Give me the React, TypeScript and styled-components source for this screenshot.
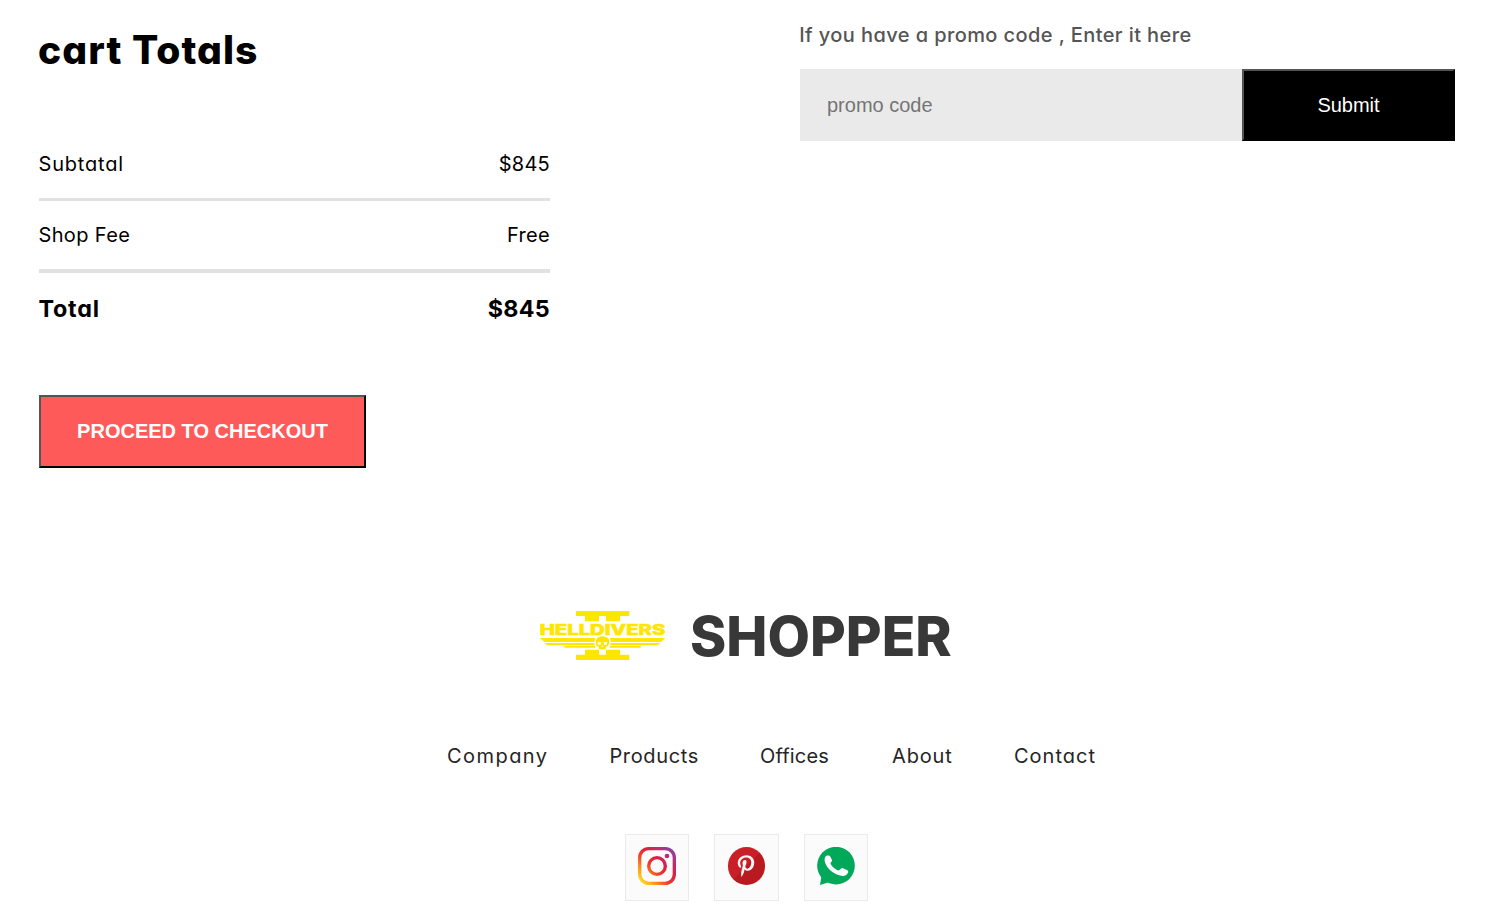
import React from "react";
import styled, { createGlobalStyle } from "styled-components";
import { FaPinterestP } from "react-icons/fa";

const GlobalStyle = createGlobalStyle`
  * { box-sizing: border-box; }
  body {
    margin: 0;
    background: #fff;
    color: #000;
    font-family: Inter, "Open Sans", sans-serif;
    font-feature-settings: "cv11";
    overflow: hidden;
  }
  h1, h3, p, ul { margin: 0; padding: 0; }
`;

const Page = styled.div`
  height: 913px;
  display: flex;
  flex-direction: column;
`;

const CartSummary = styled.section`
  display: flex;
  justify-content: space-between;
  height: 468px;
  padding: 20px 40px 0 39px;
`;

const Totals = styled.div`
  width: 511px;
  display: flex;
  flex-direction: column;
  align-items: stretch;
`;

const Title = styled.h1`
  margin-left: -1px;
  font-size: 39px;
  font-weight: 800;
  line-height: 60px;
  letter-spacing: 1.05px;
  margin-bottom: 69px;
`;

const TotalRow = styled.div`
  display: flex;
  justify-content: space-between;
  font-size: 20px;
  line-height: 30px;
`;

const GrandRow = styled(TotalRow)`
  font-size: 23.3px;
  font-weight: 700;
  line-height: 35px;
`;

const Label = styled.span<{ $spacing: number }>`
  margin-left: -0.5px;
  letter-spacing: ${(p) => p.$spacing}px;
`;

const Amount = styled(Label)`
  margin-right: ${(p) => 0.3 - p.$spacing}px;
`;

const Rule = styled.hr<{ $thickness: number; $after: number }>`
  width: 100%;
  height: ${(p) => p.$thickness}px;
  margin: 19px 0 ${(p) => p.$after}px;
  border: 0;
  background: #e1e1e1;
`;

const CheckoutButton = styled.button`
  width: 327px;
  height: 73px;
  margin-top: 69px;
  padding: 0;
  border: 2px outset #000;
  background: #ff5a5a;
  color: #fff;
  font: 700 20px "Liberation Sans", Arial, sans-serif;
`;

const Promo = styled.div`
  width: 655.5px;
`;

const PromoHint = styled.p`
  margin-left: -0.3px;
  color: #555;
  font-size: 20px;
  font-weight: 500;
  line-height: 30px;
  letter-spacing: 0.41px;
  white-space: nowrap;
`;

const PromoBox = styled.div`
  display: flex;
  height: 72px;
  margin-top: 19px;
  background: #eaeaea;
`;

const PromoInput = styled.input`
  flex: 1;
  min-width: 0;
  padding: 0 0 0 27.5px;
  border: 0;
  outline: 0;
  background: transparent;
  font: 400 20px "Liberation Sans", Arial, sans-serif;
  &::placeholder { color: #757575; }
`;

const SubmitButton = styled.button`
  width: 213px;
  padding: 0;
  border: 2px outset #000;
  background: #000;
  color: #fff;
  font: 400 20px "Liberation Sans", Arial, sans-serif;
`;

const Footer = styled.footer`
  display: flex;
  flex-direction: column;
  align-items: center;
  padding-top: 128px;
`;

const Brand = styled.div`
  align-self: flex-start;
  display: flex;
  align-items: center;
  height: 80px;
  margin-left: 539.5px;
`;

const BrandName = styled.p`
  margin-left: 24.5px;
  color: #383838;
  font-size: 55px;
  font-weight: 800;
  line-height: 80px;
`;

const FooterLinks = styled.ul`
  align-self: flex-start;
  display: grid;
  grid-template-columns: 162.4px 150.5px 132.1px 122px auto;
  margin: 65px 0 63px 447px;
  list-style: none;
  color: #252525;
  font-size: 20px;
  line-height: 30px;
`;

const FooterLink = styled.li<{ $spacing: number }>`
  letter-spacing: ${(p) => p.$spacing}px;
`;

const Socials = styled.div`
  display: flex;
  gap: 25.1px;
  margin-right: 2.2px;
`;

const SocialTile = styled.div`
  width: 64.4px;
  height: 67px;
  padding: 12px 0 0 12.3px;
  border: 1px solid #ebebeb;
  background: #fbfbfb;
`;

const PinterestDisc = styled.div`
  display: grid;
  place-items: center;
  width: 37.5px;
  height: 37.5px;
  border-radius: 50%;
  background: linear-gradient(135deg, #cb1f27 50%, #b91a20 50%);
  color: #f6f6f6;
  font-size: 22px;
`;

const LogoSvg = styled.svg`
  display: block;
  margin-bottom: 1px;
`;

function HelldiversLogo() {
  return (
    <LogoSvg width="126" height="49" viewBox="30 33 378 147" fill="#ffe600">
      <path d="M138 33H298V48H270V64H228V48H207V64H165V48H138Z" />
      <path d="M138 180H298V164H270V149H228V164H207V149H165V164H138Z" />
      <text
        x="29"
        y="104"
        fontFamily="Inter, sans-serif"
        fontWeight="800"
        fontSize="43"
        stroke="#ffe600"
        strokeWidth="1.5"
        textLength="377"
        lengthAdjust="spacingAndGlyphs"
      >
        HELLDIVERS
      </text>
      <path d="M30 114H196L193 126H43Z M240 114H406L393 126H243Z" />
      <path d="M43 129H194V136H52Z M241 129H392L383 136H241Z" />
      <path d="M101 138H196V143H105Z M239 138H335L331 143H239Z" />
      <path
        fillRule="evenodd"
        d="M217 109C230 109 239 117 238 126C238 132 236 134 234 138L227 141V148H207V141L200 138C198 134 197 131 197 126C197 116 206 109 217 109ZM203 127C202 135 208 137 213 133L212 126ZM231 127C233 135 227 137 221 133L222 126ZM217 134L214 140H220Z"
      />
    </LogoSvg>
  );
}

function InstagramIcon() {
  return (
    <svg width="38" height="38" viewBox="0 0 114 114" fill="none">
      <defs>
        <linearGradient id="insta" gradientUnits="userSpaceOnUse" x1="8" y1="106" x2="106" y2="8">
          <stop offset="0" stopColor="#ffe01b" />
          <stop offset="0.2" stopColor="#fd9a18" />
          <stop offset="0.4" stopColor="#f0412a" />
          <stop offset="0.58" stopColor="#e01f3d" />
          <stop offset="0.78" stopColor="#c32a6b" />
          <stop offset="1" stopColor="#8f3fa8" />
        </linearGradient>
      </defs>
      <rect x="5" y="5" width="104" height="104" rx="27" stroke="url(#insta)" strokeWidth="10" />
      <circle cx="57" cy="57" r="25" stroke="url(#insta)" strokeWidth="10" />
      <circle cx="87" cy="27" r="7" fill="url(#insta)" />
    </svg>
  );
}

function WhatsAppIcon() {
  return (
    <svg width="38" height="38" viewBox="0 0 114 114">
      <circle cx="57" cy="56" r="56.5" fill="#00a859" />
      <path d="M14 84L9 114L38 105Z" fill="#00a859" />
      <path
        d="M25 29C28 24 38 24 40 29L45 39C46 42 44 44 41 47C40 49 41 51 43 54C48 61 54 66 62 70C64 71 66 70 67 69L72 65C74 63 76 63 78 64L91 70C94 72 95 76 92 79C88 86 82 88 76 87C60 85 44 76 34 64C26 53 19 40 25 29Z"
        fill="#fff"
      />
    </svg>
  );
}

const links = [
  { name: "Company", spacing: 1.45 },
  { name: "Products", spacing: 0.65 },
  { name: "Offices", spacing: 0.2 },
  { name: "About", spacing: 0.85 },
  { name: "Contact", spacing: 1 },
];

export default function App() {
  return (
    <Page>
      <GlobalStyle />
      <CartSummary>
        <Totals>
          <Title>cart Totals</Title>
          <TotalRow>
            <Label $spacing={0.8}>Subtatal</Label>
            <Amount $spacing={0.2}>$845</Amount>
          </TotalRow>
          <Rule $thickness={3} $after={19} />
          <TotalRow>
            <Label $spacing={0.35}>Shop Fee</Label>
            <Amount $spacing={0.3}>Free</Amount>
          </TotalRow>
          <Rule $thickness={4} $after={18} />
          <GrandRow>
            <Label $spacing={0.8}>Total</Label>
            <Amount $spacing={0.3}>$845</Amount>
          </GrandRow>
          <CheckoutButton>PROCEED TO CHECKOUT</CheckoutButton>
        </Totals>
        <Promo>
          <PromoHint>If you have a promo code , Enter it here</PromoHint>
          <PromoBox>
            <PromoInput type="text" placeholder="promo code" />
            <SubmitButton>Submit</SubmitButton>
          </PromoBox>
        </Promo>
      </CartSummary>
      <Footer>
        <Brand>
          <HelldiversLogo />
          <BrandName>SHOPPER</BrandName>
        </Brand>
        <FooterLinks>
          {links.map((link) => (
            <FooterLink key={link.name} $spacing={link.spacing}>
              {link.name}
            </FooterLink>
          ))}
        </FooterLinks>
        <Socials>
          <SocialTile>
            <InstagramIcon />
          </SocialTile>
          <SocialTile>
            <PinterestDisc>
              <FaPinterestP />
            </PinterestDisc>
          </SocialTile>
          <SocialTile>
            <WhatsAppIcon />
          </SocialTile>
        </Socials>
      </Footer>
    </Page>
  );
}
